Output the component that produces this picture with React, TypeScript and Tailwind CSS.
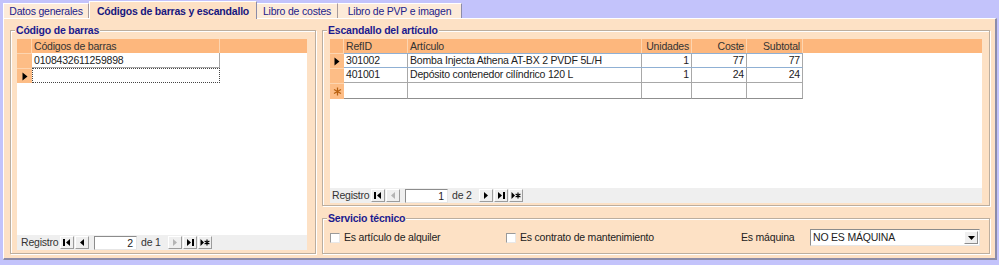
import React from "react";

const HEAD = "bg-[#fdb77d]";
const SEL = "bg-[#fdbd86]";

function NavIcon({ kind, disabled }: { kind: "first" | "prev" | "next" | "last" | "new"; disabled?: boolean }) {
  const c = disabled ? "#b4b4b4" : "#000";
  return (
    <svg width="10" height="9" viewBox="0 0 10 9">
      {kind === "first" && (
        <>
          <rect x="1" y="1" width="2" height="7" fill={c} />
          <path d="M8 1 L4 4.5 L8 8 Z" fill={c} />
        </>
      )}
      {kind === "prev" && <path d="M7 1 L3 4.5 L7 8 Z" fill={c} />}
      {kind === "next" && <path d="M3 1 L7 4.5 L3 8 Z" fill={c} />}
      {kind === "last" && (
        <>
          <path d="M2 1 L6 4.5 L2 8 Z" fill={c} />
          <rect x="7" y="1" width="2" height="7" fill={c} />
        </>
      )}
      {kind === "new" && (
        <>
          <path d="M0.5 1 L4 4.5 L0.5 8 Z" fill={c} />
          <path d="M7 1.5 V7.5 M4.6 3 L9.4 6 M9.4 3 L4.6 6" stroke={c} strokeWidth="1.2" />
        </>
      )}
    </svg>
  );
}

function NavButton({ kind, disabled }: { kind: "first" | "prev" | "next" | "last" | "new"; disabled?: boolean }) {
  return (
    <div className="w-[14px] h-[13px] flex items-center justify-center bg-[#efefef] border-t border-l border-white border-r border-b border-r-[#9c9c9c] border-b-[#9c9c9c]">
      <NavIcon kind={kind} disabled={disabled} />
    </div>
  );
}

function NavBar({ current, total, prevOff, nextOff, left }: { current: number; total: number; prevOff?: boolean; nextOff?: boolean; left: string }) {
  return (
    <div className={`h-[15px] bg-[#efefef] flex items-center text-[#333] ${left}`}>
      <span className="w-[39px] whitespace-nowrap">Registro</span>
      <div className="flex gap-[1px]">
        <NavButton kind="first" />
        <NavButton kind="prev" disabled={prevOff} />
      </div>
      <div className="ml-[5px] w-[43px] h-[14px] bg-white border-t border-l border-[#8c8c8c] border-b border-r border-b-[#e6e6e6] border-r-[#e6e6e6] text-right pr-[3px] leading-[12px] text-[#222]">
        {current}
      </div>
      <span className="ml-[4px] w-[27px]">de {total}</span>
      <div className="flex gap-[1px]">
        <NavButton kind="next" disabled={nextOff} />
        <NavButton kind="last" />
        <NavButton kind="new" />
      </div>
    </div>
  );
}

function Legend({ children }: { children: React.ReactNode }) {
  return (
    <span className="absolute -top-[8px] left-[4px] px-[1px] bg-[#fde1c5] font-bold text-[#1b1b8f] leading-[14px] whitespace-nowrap">
      {children}
    </span>
  );
}

const Triangle = () => (
  <svg width="6" height="9" viewBox="0 0 6 9">
    <path d="M0.5 0.5 L5.5 4.5 L0.5 8.5 Z" fill="#000" />
  </svg>
);

const cols = [
  { w: "w-[64px]", label: "RefID", right: false },
  { w: "w-[234px]", label: "Artículo", right: false },
  { w: "w-[50px]", label: "Unidades", right: true },
  { w: "w-[55px]", label: "Coste", right: true },
  { w: "w-[56px]", label: "Subtotal", right: true },
];

const rows = [
  ["301002", "Bomba Injecta Athena AT-BX 2 PVDF 5L/H", "1", "77", "77"],
  ["401001", "Depósito contenedor cilíndrico 120 L", "1", "24", "24"],
];

export default function App() {
  return (
    <div className="w-[999px] h-[265px] overflow-hidden bg-[#c3c3fb] font-['Liberation_Sans',Arial,sans-serif] text-[10.5px] tracking-[-0.2px] text-[#222]">
      {/* tabs */}
      <div className="h-[18px] pl-[3px] flex items-end relative z-10">
        <div className="w-[86px] h-[15px] bg-[#fdebd9] border-t border-l border-white border-r border-r-[#a89a9a] flex items-center justify-center pt-[2px] text-[#22228a]">
          Datos generales
        </div>
        <div className="w-[168px] h-[18px] -mb-[1px] bg-[#fde1c5] border-t border-l border-white border-r border-r-[#8c8ca8] flex items-start pt-[2px] justify-center font-bold text-[#16167e] whitespace-nowrap">
          Códigos de barras y escandallo
        </div>
        <div className="w-[81px] h-[15px] bg-[#fdebd9] border-t border-white border-r border-r-[#a89a9a] flex items-center justify-center pt-[2px] text-[#22228a]">
          Libro de costes
        </div>
        <div className="w-[124px] h-[15px] bg-[#fdebd9] border-t border-white border-r border-r-[#8c8ca8] flex items-center justify-center pt-[2px] text-[#22228a]">
          Libro de PVP e imagen
        </div>
      </div>

      {/* panel */}
      <div className="ml-[3px] w-[994px] h-[242px] bg-[#fde1c5] border-t border-l border-white border-r-2 border-b-2 border-r-[#8c8ca8] border-b-[#8c8ca8] pl-[6px] pt-[11px] flex gap-[6px]">
        {/* left fieldset */}
        <div className="relative w-[306px] h-[224px] border border-[#bcae9f] shadow-[inset_1px_1px_0_#fff,1px_1px_0_#fff] pt-[8px] pl-[6px]">
          <Legend>Código de barras</Legend>
          <div className="w-[290px] h-[211px] bg-white flex flex-col">
            <div className={`h-[14px] flex ${HEAD} text-[#333]`}>
              <div className="w-[15px] border-r border-[#fdd5b0]" />
              <div className="w-[188px] border-r border-[#fdd5b0] pl-[2px] leading-[14px]">Códigos de barras</div>
              <div className="flex-1" />
            </div>
            <div className="h-[15px] flex">
              <div className={`w-[15px] ${SEL} border-t border-[#fdd5b0]`} />
              <div className="w-[188px] border-b border-r border-[#a8a8a8] pl-[2px] leading-[14px]">0108432611259898</div>
            </div>
            <div className="h-[15px] flex">
              <div className={`w-[15px] ${SEL} border-t border-[#fdd5b0] flex items-center justify-center`}>
                <Triangle />
              </div>
              <div className="w-[188px] border border-dotted border-[#444]" />
            </div>
            <div className="flex-1" />
            <NavBar current={2} total={1} nextOff left="pl-[4px]" />
          </div>
        </div>

        {/* right column */}
        <div className="w-[668px] flex flex-col">
          <div className="relative h-[176px] border border-[#bcae9f] shadow-[inset_1px_1px_0_#fff,1px_1px_0_#fff] pt-[8px] pl-[7px]">
            <Legend>Escandallo del artículo</Legend>
            <div className="w-[652px] h-[164px] bg-white flex flex-col">
              <div className={`h-[14px] flex ${HEAD} text-[#333]`}>
                <div className="w-[14px] border-r border-[#fdd5b0]" />
                {cols.map((c) => (
                  <div key={c.label} className={`${c.w} border-r border-[#fdd5b0] px-[2px] leading-[14px] ${c.right ? "text-right" : ""}`}>
                    {c.label}
                  </div>
                ))}
                <div className="flex-1" />
              </div>
              {rows.map((r, i) => (
                <div key={r[0]} className="h-[15px] flex">
                  <div className={`w-[14px] ${SEL} border-t border-[#fdd5b0] flex items-center justify-center`}>
                    {i === 0 && <Triangle />}
                  </div>
                  {cols.map((c, j) => (
                    <div
                      key={c.label}
                      className={`${c.w} border-b border-r ${i === 0 ? "border-b-[#8fb0d4] border-t border-t-[#8fb0d4]" : "border-b-[#a8a8a8]"} border-r-[#a8a8a8] ${j === 4 && i === 0 ? "border-r-[#8fb0d4]" : ""} px-[2px] leading-[13px] whitespace-nowrap ${c.right ? "text-right" : ""}`}
                    >
                      {r[j]}
                    </div>
                  ))}
                </div>
              ))}
              <div className="h-[16px] flex">
                <div className={`w-[14px] ${SEL} border-t border-[#fdd5b0] flex items-center justify-center`}>
                  <svg width="9" height="9" viewBox="0 0 9 9">
                    <path d="M4.5 0.5 V8.5 M1 2.5 L8 6.5 M8 2.5 L1 6.5" stroke="#b8600f" strokeWidth="1.3" />
                  </svg>
                </div>
                {cols.map((c) => (
                  <div key={c.label} className={`${c.w} border-b border-r border-[#8f8f8f] border-r-[#a8a8a8]`} />
                ))}
              </div>
              <div className="flex-1" />
              <NavBar current={1} total={2} prevOff left="pl-[2px]" />
            </div>
          </div>

          {/* servicio técnico */}
          <div className="relative mt-[12px] h-[36px] border border-[#bcae9f] shadow-[inset_1px_1px_0_#fff,1px_1px_0_#fff] pl-[7px] pt-[3px] flex items-center text-[#222]">
            <Legend>Servicio técnico</Legend>
            <div className="w-[176px] flex items-center gap-[4px]">
              <div className="w-[10px] h-[10px] bg-white border-t border-l border-[#9a9a9a] border-b border-r border-b-[#e8e8e8] border-r-[#e8e8e8]" />
              <span>Es artículo de alquiler</span>
            </div>
            <div className="w-[235px] flex items-center gap-[4px]">
              <div className="w-[10px] h-[10px] bg-white border-t border-l border-[#9a9a9a] border-b border-r border-b-[#e8e8e8] border-r-[#e8e8e8]" />
              <span>Es contrato de mantenimiento</span>
            </div>
            <span className="w-[69px]">Es máquina</span>
            <div className="w-[170px] h-[17px] bg-white border-t border-l border-[#8c8c8c] border-b border-r border-b-[#e6e6e6] border-r-[#e6e6e6] flex items-center">
              <span className="flex-1 pl-[2px] text-[#222]">NO ES MÁQUINA</span>
              <div className="w-[14px] h-[13px] mr-[1px] bg-[#efefef] border-t border-l border-white border-b border-r border-b-[#8c8c8c] border-r-[#8c8c8c] flex items-center justify-center">
                <svg width="7" height="4" viewBox="0 0 7 4">
                  <path d="M0 0 H7 L3.5 4 Z" fill="#000" />
                </svg>
              </div>
            </div>
          </div>
        </div>
      </div>
    </div>
  );
}
